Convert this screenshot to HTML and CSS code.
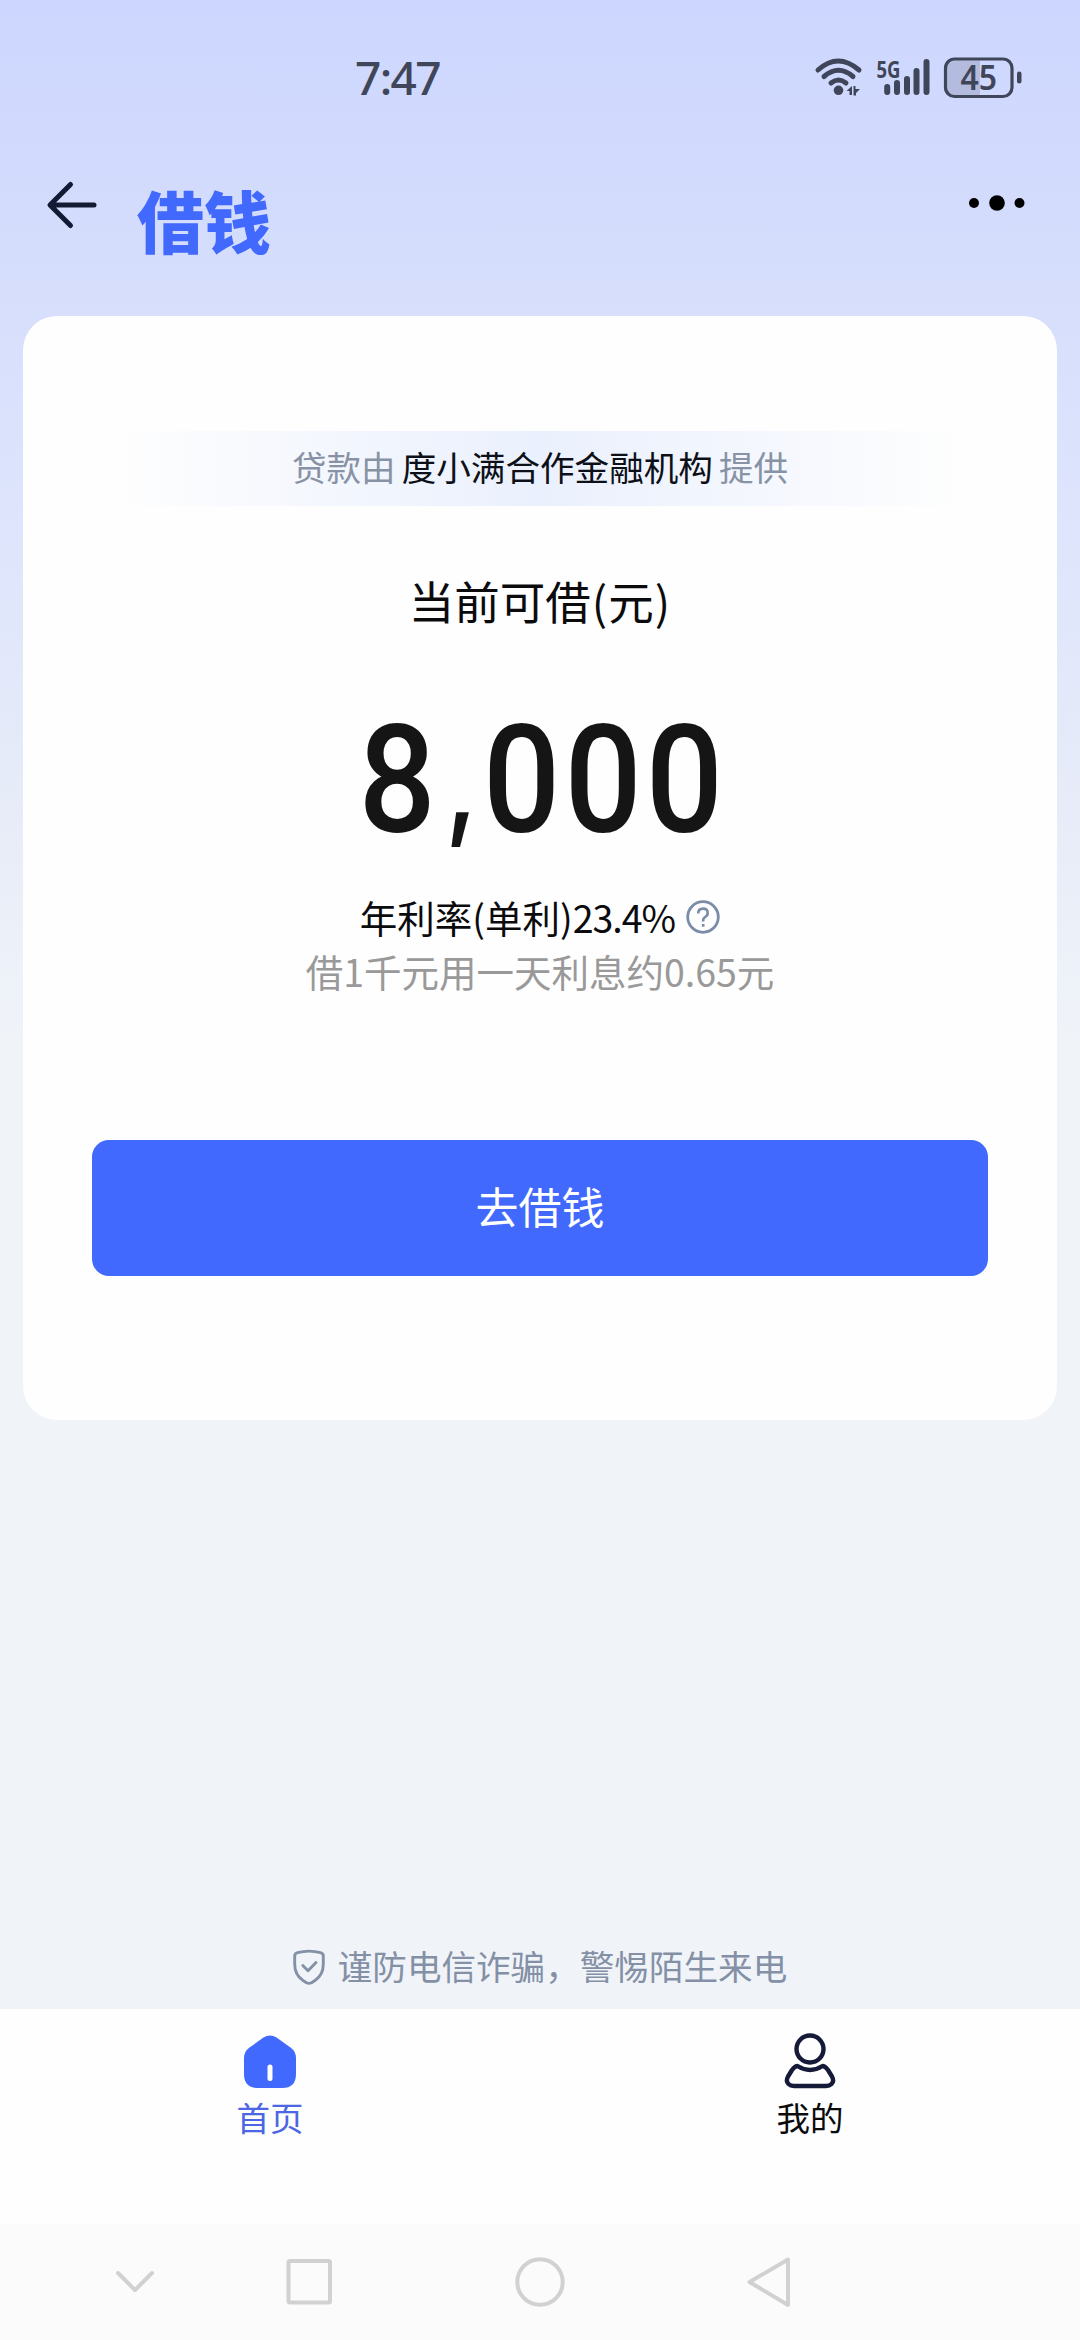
FILE: index.html
```html
<!DOCTYPE html>
<html lang="zh-CN">
<head>
<meta charset="utf-8">
<title>借钱</title>
<link rel="stylesheet" href="styles.css">
</head>
<body>
<div class="screen">
  <header class="status">
    <span class="time">7:47</span>
    <svg class="status-icons" width="210" height="50" viewBox="0 0 210 50">
      <g fill="none" stroke="#404659" stroke-width="5" stroke-linecap="round">
        <path d="M4 17Q24 -1 45 17"/>
        <path d="M10 23.500Q24.500 11 39 23.500"/>
        <path d="M17 30Q24.500 24 32 30"/>
      </g>
      <circle cx="24.500" cy="37.300" r="4.800" fill="#404659"/>
      <path d="M32.500 38l5.500-5v9h-2.500v-4zM39.500 33h2v3h4.500l-4 4v2.500h-2.500z" fill="#404659"/>
      <text x="62.500" y="25" class="net" textLength="24" lengthAdjust="spacingAndGlyphs">5G</text>
      <path d="M73.200 34v5M83 30v9M93 26v13M102.500 18v21M112.500 9v30" stroke="#404659" stroke-width="6" stroke-linecap="round"/>
      <path d="M139 6.500h27v36h-27q-7 0-7-7v-22q0-7 7-7z" fill="#b3bcde"/>
      <rect x="131.500" y="6" width="66.500" height="37.500" rx="9" fill="none" stroke="#404659" stroke-width="3.200"/>
      <rect x="203" y="18.500" width="4.500" height="12" rx="2.200" fill="#404659"/>
      <text x="146.500" y="36.500" class="level" textLength="36.500" lengthAdjust="spacingAndGlyphs">45</text>
    </svg>
  </header>

  <nav class="topbar">
    <svg width="50" height="46" viewBox="0 0 50 46" fill="none" stroke="#121b33" stroke-width="5" stroke-linecap="round" stroke-linejoin="round"><path d="M23.500 2.500L3 23L23.500 43.500M4 23H47"/></svg>
    <h1 class="title">借钱</h1>
    <svg class="more" width="56" height="16" viewBox="0 0 56 16"><circle cx="5" cy="8" r="5"/><circle cx="28" cy="8" r="7.800"/><circle cx="50.500" cy="8" r="5"/></svg>
  </nav>

  <main class="card">
    <p class="provider">贷款由<b>度小满合作金融机构</b>提供</p>
    <p class="label">当前可借<span class="paren">(</span>元<span class="paren">)</span></p>
    <p class="amount"><span class="amount-text">8<span class="comma">,</span>000</span></p>
    <p class="rate"><span>年利率(单利)<span class="num">23.4%</span></span>
      <svg width="34" height="34" viewBox="0 0 34 34" fill="none" stroke="#7b8ca8" stroke-width="2.800"><circle cx="17" cy="17" r="15.300"/><path d="M12.200 13.500Q12.200 8.600 17 8.600T21.700 13Q21.700 15.500 19.200 17T17.200 21.500M17.200 24v2.800" stroke-width="2.600"/></svg>
    </p>
    <p class="daily">借1千元用一天利息约0.65元</p>
    <button class="borrow">去借钱</button>
  </main>

  <p class="warning">
    <svg width="32" height="36" viewBox="0 0 32 36" fill="none" stroke="#8490a5" stroke-width="2.900" stroke-linecap="round" stroke-linejoin="round"><path d="M4.500 3.700Q16 .500 27.500 3.700Q30.300 4.400 30.300 7V15Q30.300 26 22 31.500L18.500 33.800Q16 35 13.500 33.800L10 31.500Q1.700 26 1.700 15V7Q1.700 4.400 4.500 3.700Z"/><path d="M9.800 16.500L15 21.700L23 13.500"/></svg>
    <span class="warning-text">谨防电信诈骗，警惕陌生来电</span>
  </p>

  <nav class="tabs">
    <a class="tab active">
      <svg width="54" height="56" viewBox="0 0 54 56"><path d="M20.500 3.600Q27 -.500 33.500 3.600L47.500 13.500Q53 17.500 53 24V40Q53 54 39 54H15Q1 54 1 40V24Q1 17.500 6.500 13.500Z" fill="#4169fe"/><path d="M27 33V44.500" stroke="#fff" stroke-width="5" stroke-linecap="round"/></svg>
      <span>首页</span>
    </a>
    <a class="tab">
      <svg width="54" height="56" viewBox="0 0 54 56" fill="none" stroke="#141a38" stroke-width="4.400" stroke-linejoin="round"><circle cx="27" cy="15" r="13.500"/><path d="M14.500 32Q27 40 39.500 32Q42 32 45 36L49 42.500Q51.500 47 48.500 50Q46.500 52 43 52H11Q7.500 52 5.500 50Q2.500 47 5 42.500L9 36Q12 32 14.500 32Z"/></svg>
      <span>我的</span>
    </a>
  </nav>

  <footer class="sysnav">
    <svg width="1080" height="116" viewBox="0 0 1080 116" fill="none" stroke="#d1d1d1" stroke-width="4" stroke-linecap="round" stroke-linejoin="round"><path d="M118 49L135 66L152 49"/><rect x="288.500" y="37" width="41.500" height="41.500" rx="1.500"/><circle cx="540" cy="58" r="22.700"/><path d="M788 35.500V81L749.500 58Z"/></svg>
  </footer>
</div>
</body>
</html>
```
FILE: styles.css
```css
* { box-sizing: border-box; margin: 0; padding: 0; }
body {
  font-family: "Noto Sans CJK SC", sans-serif;
  color: #0b0b0d;
}
svg { display: block; flex: none; overflow: visible; }
.screen {
  width: 1080px;
  height: 2340px;
  display: flex;
  flex-direction: column;
  background: linear-gradient(180deg, #cdd6fe 0, #d7dffc 320px, #dde4fc 500px, #e9edf8 850px, #f0f4f9 1050px, #f0f4f9 100%);
}
.status {
  height: 156px;
  padding: 0 56px 0 355px;
  display: flex;
  justify-content: space-between;
  align-items: center;
}
.time {
  padding-bottom: 2px;
  font: 500 46px/60px "Noto Sans", sans-serif;
  letter-spacing: -1.6px;
  color: #404659;
}
.net { font: 700 24px "Noto Sans", sans-serif; fill: #404659; }
.level { font: 600 34px "Noto Sans", sans-serif; fill: #404659; }
.topbar {
  height: 160px;
  padding: 26px 55px 0 47px;
  display: flex;
  align-items: flex-start;
}
.title {
  margin: -3px 0 0 40px;
  font-size: 67px;
  font-weight: 900;
  line-height: 80px;
  color: #4169fe;
}
.more { margin: 13px 0 0 auto; }
.card {
  margin: 0 23px;
  height: 1104px;
  padding: 115px 69px 0;
  border-radius: 34px;
  background: #fefefe;
  display: flex;
  flex-direction: column;
  align-items: center;
}
.provider {
  width: 860px;
  height: 75px;
  font-size: 34.6px;
  line-height: 70px;
  text-align: center;
  color: #8793a5;
  background: linear-gradient(90deg, #fefefe 0, #eaf0fd 50%, #fefefe 100%);
}
.provider b { margin: 0 6px; font-weight: 400; color: #0d1018; }
.label { margin-top: 64px; font-size: 45.5px; line-height: 60px; }
.paren { padding: 0 1px; }
.amount {
  margin-top: 74px;
  height: 154px;
  font: 500 151px/154px Roboto, sans-serif;
  color: #151515;
}
.amount-text {
  display: inline-block;
  letter-spacing: 4.6px;
  transform: translateX(3px) scaleX(.9);
}
.comma {
  display: inline-block;
  width: 48px;
  font: 500 122px/100px Inter, sans-serif;
  letter-spacing: 0;
  text-align: center;
  vertical-align: 7px;
}
.rate {
  margin-top: 30px;
  height: 58px;
  display: flex;
  align-items: center;
  gap: 11px;
  font-size: 37.5px;
  line-height: 58px;
}
.rate span { margin-top: -1px; }
.num { letter-spacing: -1px; }
.daily { font-size: 37.5px; line-height: 50px; color: #999; }
.borrow {
  margin-top: 144px;
  width: 896px;
  height: 136px;
  padding-bottom: 7px;
  border: 0;
  border-radius: 17px;
  background: #4169fe;
  color: #fff;
  font: 400 43px/60px "Noto Sans CJK SC", sans-serif;
}
.warning {
  margin-top: auto;
  height: 89px;
  padding-top: 4px;
  display: flex;
  justify-content: center;
  align-items: center;
  gap: 13px;
  font-size: 34.6px;
  line-height: 50px;
  color: #8490a5;
}
.warning-text { padding-bottom: 4px; }
.tabs { height: 215px; background: #fefefe; display: flex; }
.tab {
  flex: 1;
  padding-top: 25px;
  display: flex;
  flex-direction: column;
  align-items: center;
  gap: 4px;
  font-size: 33.5px;
  line-height: 46px;
}
.active { color: #4c66e4; }
.sysnav { height: 116px; background: #fbfbfb; }
```
